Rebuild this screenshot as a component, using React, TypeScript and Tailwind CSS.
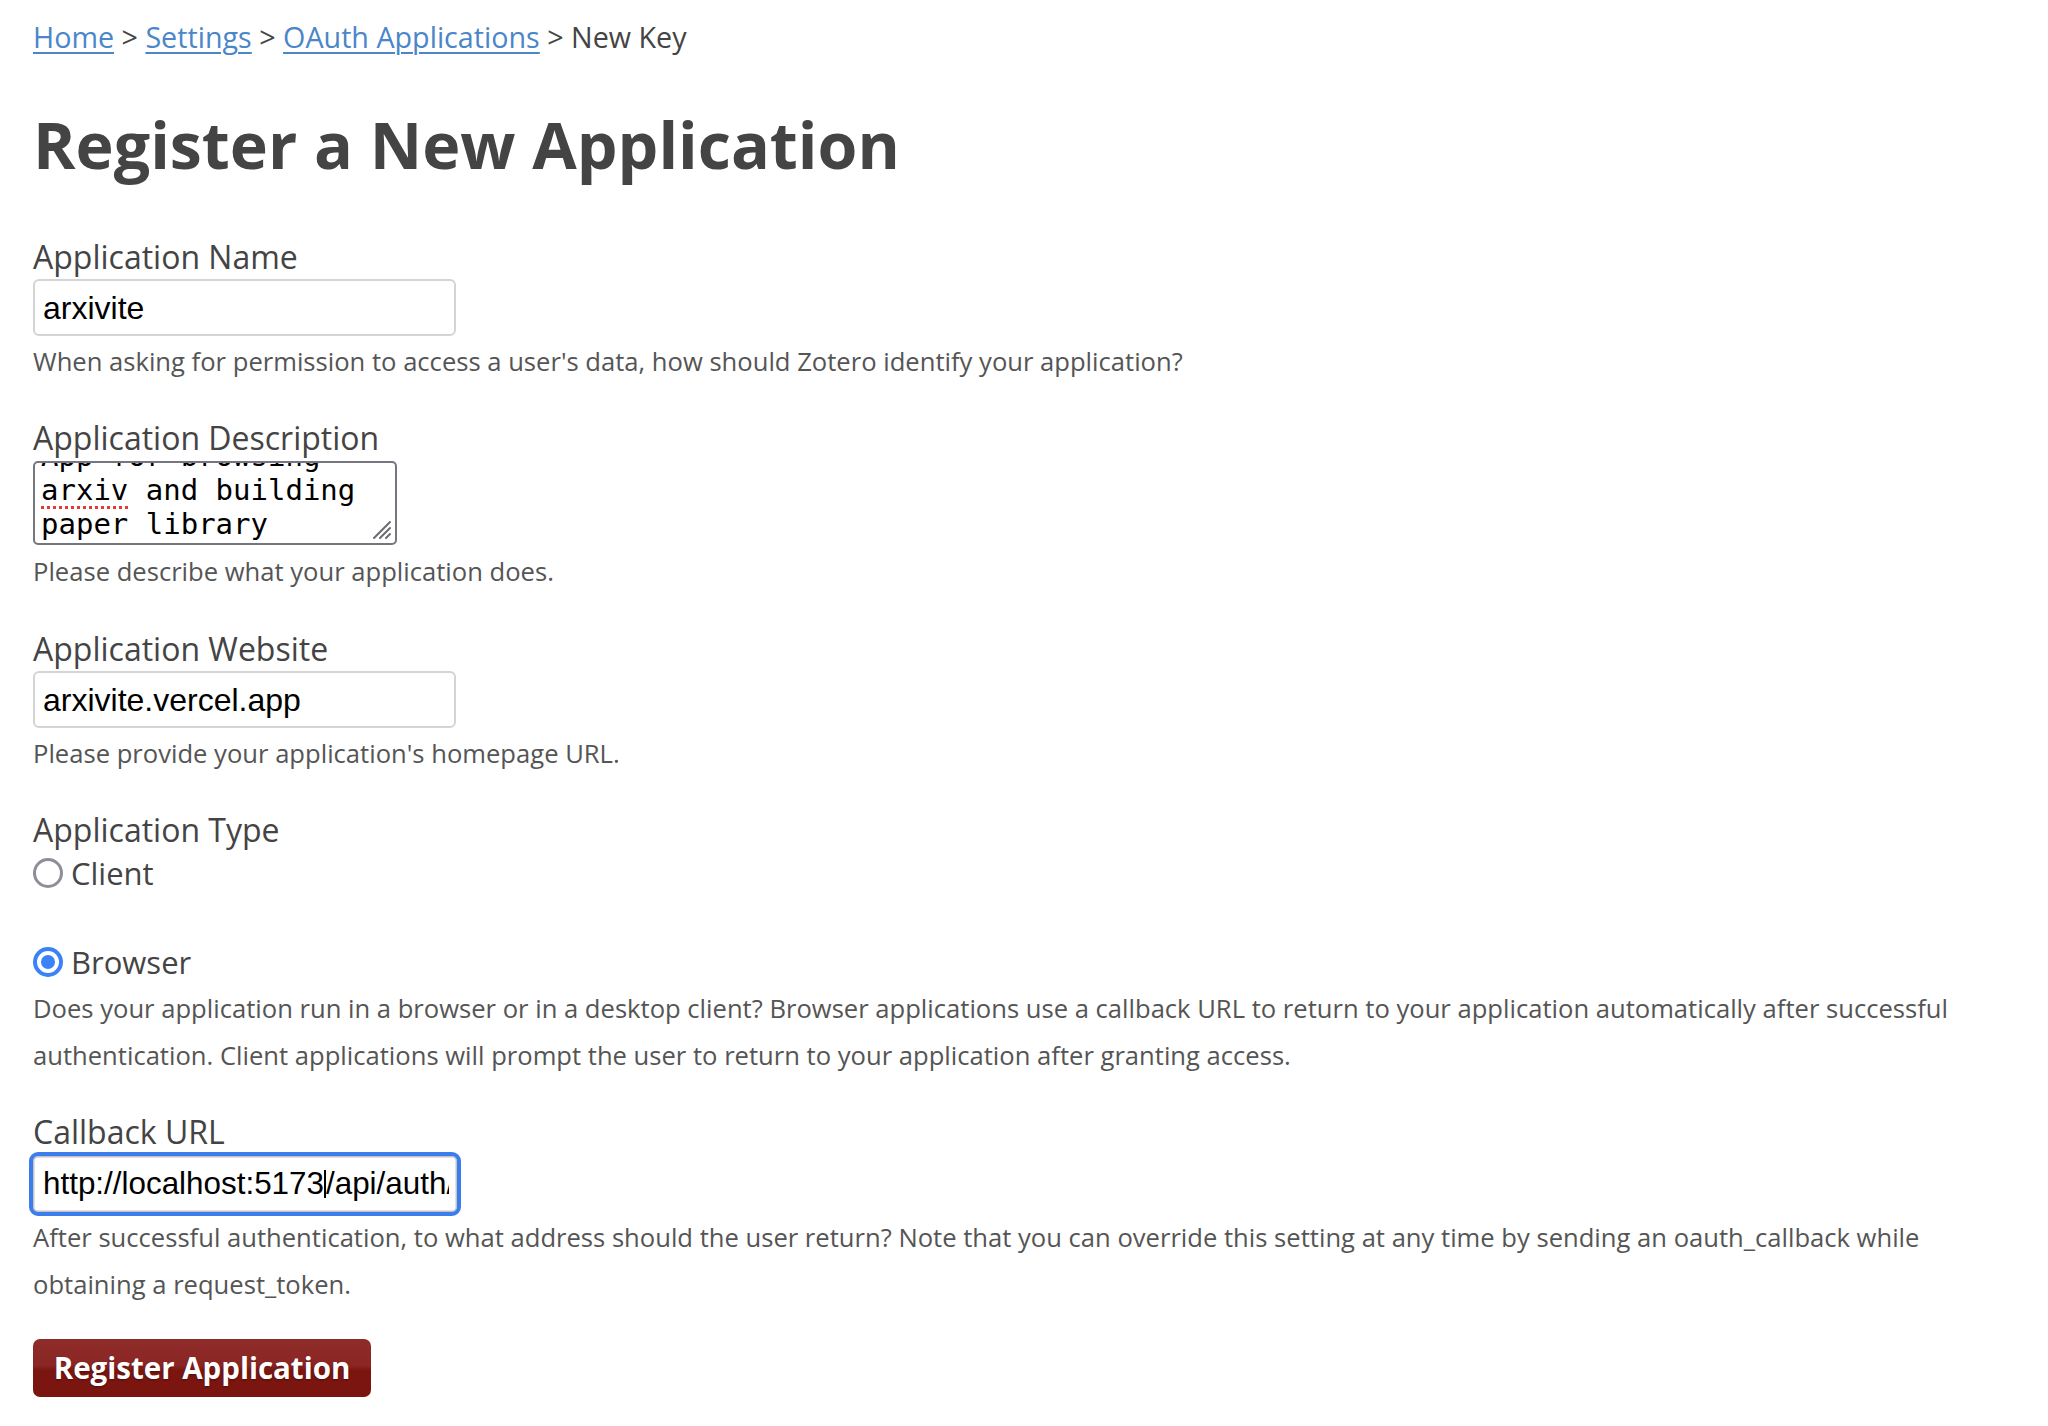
import React from "react";

const sans = "font-['Open_Sans',sans-serif]";

function Label({ children, className = "" }: { children: React.ReactNode; className?: string }) {
  return <div className={`text-[32px] leading-[40px] text-[#444] ${className}`}>{children}</div>;
}

function Help({ children, className = "" }: { children: React.ReactNode; className?: string }) {
  return <div className={`text-[25.6px] leading-[47px] text-[#555] ${className}`}>{children}</div>;
}

function TextInput({ value }: { value: string }) {
  return (
    <div className="mt-[2px] flex h-[57px] w-[423px] items-center rounded-[6px] border-2 border-[#d4d4d4] bg-white px-[8px]">
      <span className="font-['Liberation_Sans',sans-serif] text-[32px] text-black">{value}</span>
    </div>
  );
}

function Radio({ checked, label }: { checked: boolean; label: string }) {
  return (
    <div className="flex h-[40px] items-center gap-[8px]">
      {checked ? (
        <span className="flex h-[30px] w-[30px] items-center justify-center rounded-full bg-[#3b82f6]">
          <span className="flex h-[22px] w-[22px] items-center justify-center rounded-full bg-white">
            <span className="h-[14px] w-[14px] rounded-full bg-[#3b82f6]" />
          </span>
        </span>
      ) : (
        <span className="h-[30px] w-[30px] rounded-full border-[3px] border-[#8e8e96] bg-white" />
      )}
      <span className="text-[31px] leading-[40px] text-[#444]">{label}</span>
    </div>
  );
}

export default function App() {
  return (
    <div className={`min-h-[1426px] bg-white pl-[33px] pt-[18px] ${sans} text-[#444]`}>
      <div className="text-[28.7px] leading-[38px]">
        <a className="text-[#4a86c8] underline underline-offset-[4px] decoration-[1.5px]" href="#">Home</a>
        <span className="text-[#444]"> &gt; </span>
        <a className="text-[#4a86c8] underline underline-offset-[4px] decoration-[1.5px]" href="#">Settings</a>
        <span className="text-[#444]"> &gt; </span>
        <a className="text-[#4a86c8] underline underline-offset-[4px] decoration-[1.5px]" href="#">OAuth Applications</a>
        <span className="text-[#444]"> &gt; New Key</span>
      </div>

      <h1 className="mt-[50px] text-[64.5px] font-bold leading-[76px] text-[#444]">Register a New Application</h1>

      <Label className="mt-[55px]">Application Name</Label>
      <TextInput value="arxivite" />
      <Help className="mt-[2px]">When asking for permission to access a user's data, how should Zotero identify your application?</Help>

      <Label className="mt-[33px]">Application Description</Label>
      <div className="relative mt-[3px] h-[84px] w-[364px] overflow-hidden rounded-[5px] border-2 border-[#767680] bg-white">
        <div className="-mt-[24px] pl-[6px] font-['DejaVu_Sans_Mono',monospace] text-[29px] leading-[34px] text-black">
          <div>App for browsing</div>
          <div>
            <span className="underline decoration-dotted decoration-[#e53935] decoration-[3px] underline-offset-[6px]">arxiv</span> and building
          </div>
          <div>paper library</div>
        </div>
        <svg className="absolute bottom-[3px] right-[3px]" width="22" height="22" viewBox="0 0 22 22">
          <g stroke="#6b6b70" strokeWidth="2" strokeLinecap="round">
            <line x1="4" y1="20" x2="20" y2="4" />
            <line x1="10" y1="20" x2="20" y2="10" />
            <line x1="16" y1="20" x2="20" y2="16" />
          </g>
        </svg>
      </div>
      <Help className="mt-[3px]">Please describe what your application does.</Help>

      <Label className="mt-[34px]">Application Website</Label>
      <div className="mt-[1px]">
        <TextInput value="arxivite.vercel.app" />
      </div>
      <Help className="mt-[2px]">Please provide your application's homepage URL.</Help>

      <Label className="mt-[33px]">Application Type</Label>
      <div className="mt-[3px]">
        <Radio checked={false} label="Client" />
      </div>
      <div className="mt-[49px]">
        <Radio checked={true} label="Browser" />
      </div>
      <Help className="mt-[3px]">
        Does your application run in a browser or in a desktop client? Browser applications use a callback URL to return to your application automatically after successful
        <br />
        authentication. Client applications will prompt the user to return to your application after granting access.
      </Help>

      <Label className="mt-[33px]">Callback URL</Label>
      <div className="-ml-[4px] flex h-[64px] w-[432px] items-center rounded-[9px] border-[4px] border-[#3b7ded] bg-white shadow-[inset_0_0_0_1.5px_#c4c4c4]">
        <div className="ml-[10px] w-[406px] overflow-hidden whitespace-nowrap font-['Liberation_Sans',sans-serif] text-[31.4px] leading-[40px] text-black">
          http://localhost:5173<span className="inline-block h-[28px] w-[2px] translate-y-[4px] bg-black align-baseline" />/api/auth/callback
        </div>
      </div>
      <Help className="-mt-[2px]">
        After successful authentication, to what address should the user return? Note that you can override this setting at any time by sending an oauth_callback while
        <br />
        obtaining a request_token.
      </Help>

      <button className="mt-[31px] flex h-[58px] w-[338px] items-center justify-center rounded-[7px] bg-[linear-gradient(to_bottom,#8f2c2a_0%,#8a2624_46%,#7b1510_54%,#7b1510_100%)] text-[29.5px] font-bold text-white [text-shadow:0_1px_2px_rgba(0,0,0,0.4)]">
        Register Application
      </button>
    </div>
  );
}
